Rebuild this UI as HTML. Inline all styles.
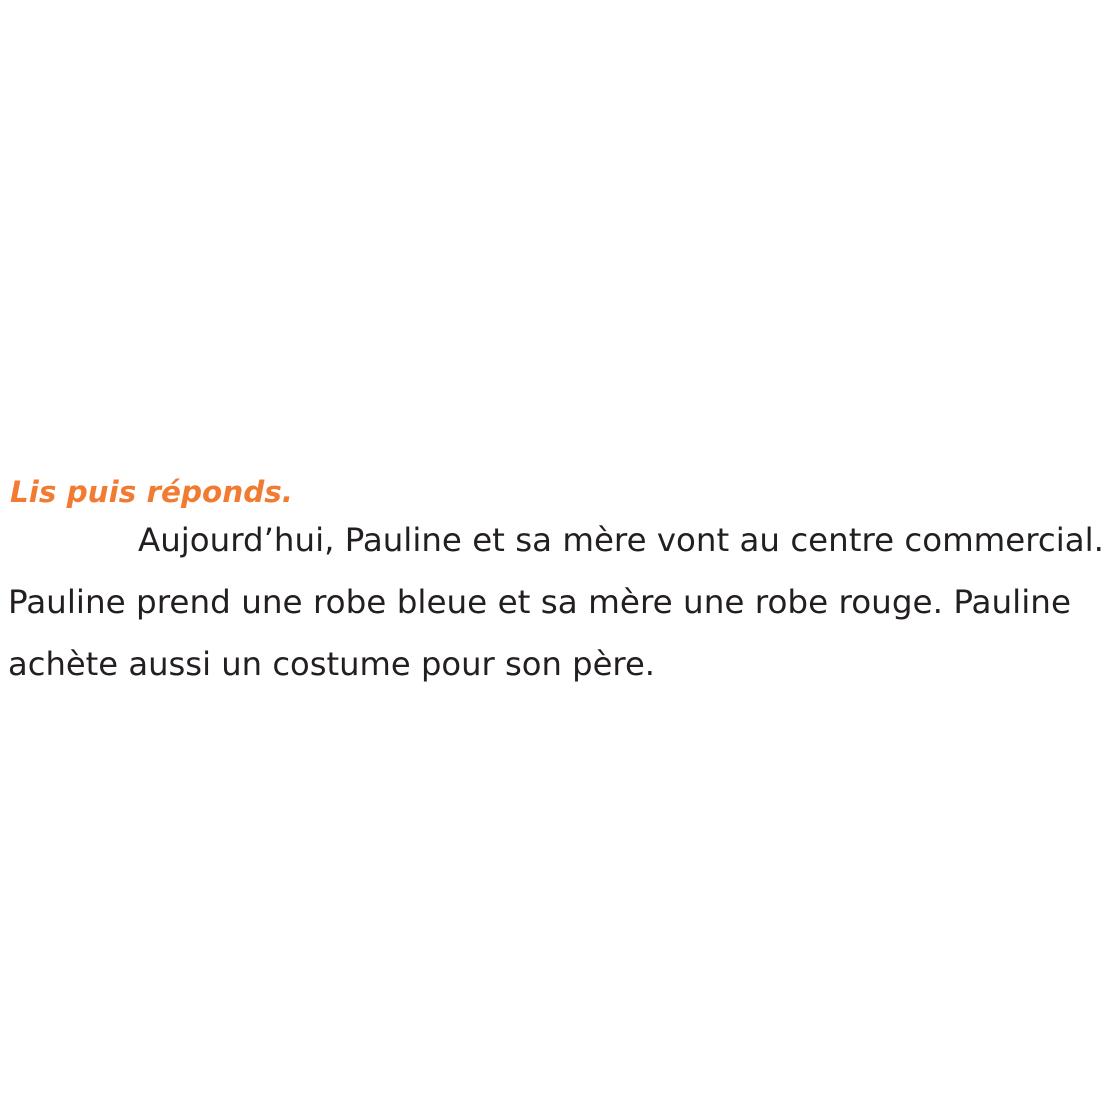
<!DOCTYPE html>
<html><head><meta charset="utf-8"><style>
html,body{margin:0;padding:0;background:#fff;width:1108px;height:1108px;overflow:hidden}
</style></head><body>
<svg width="1108" height="1108" xmlns="http://www.w3.org/2000/svg">
<text x="10" y="502" font-family="DejaVu Sans, sans-serif" font-weight="bold" font-style="italic" font-size="29" fill="#f27b32" textLength="283" lengthAdjust="spacingAndGlyphs">Lis puis réponds.</text>
<g font-family="DejaVu Sans, sans-serif" font-size="32" fill="#231f20">
<text x="138" y="551" textLength="966" lengthAdjust="spacingAndGlyphs">Aujourd’hui, Pauline et sa mère vont au centre commercial.</text>
<text x="8" y="613" textLength="1063" lengthAdjust="spacingAndGlyphs">Pauline prend une robe bleue et sa mère une robe rouge. Pauline</text>
<text x="8" y="675" textLength="647" lengthAdjust="spacingAndGlyphs">achète aussi un costume pour son père.</text>
</g>
</svg>
</body></html>
